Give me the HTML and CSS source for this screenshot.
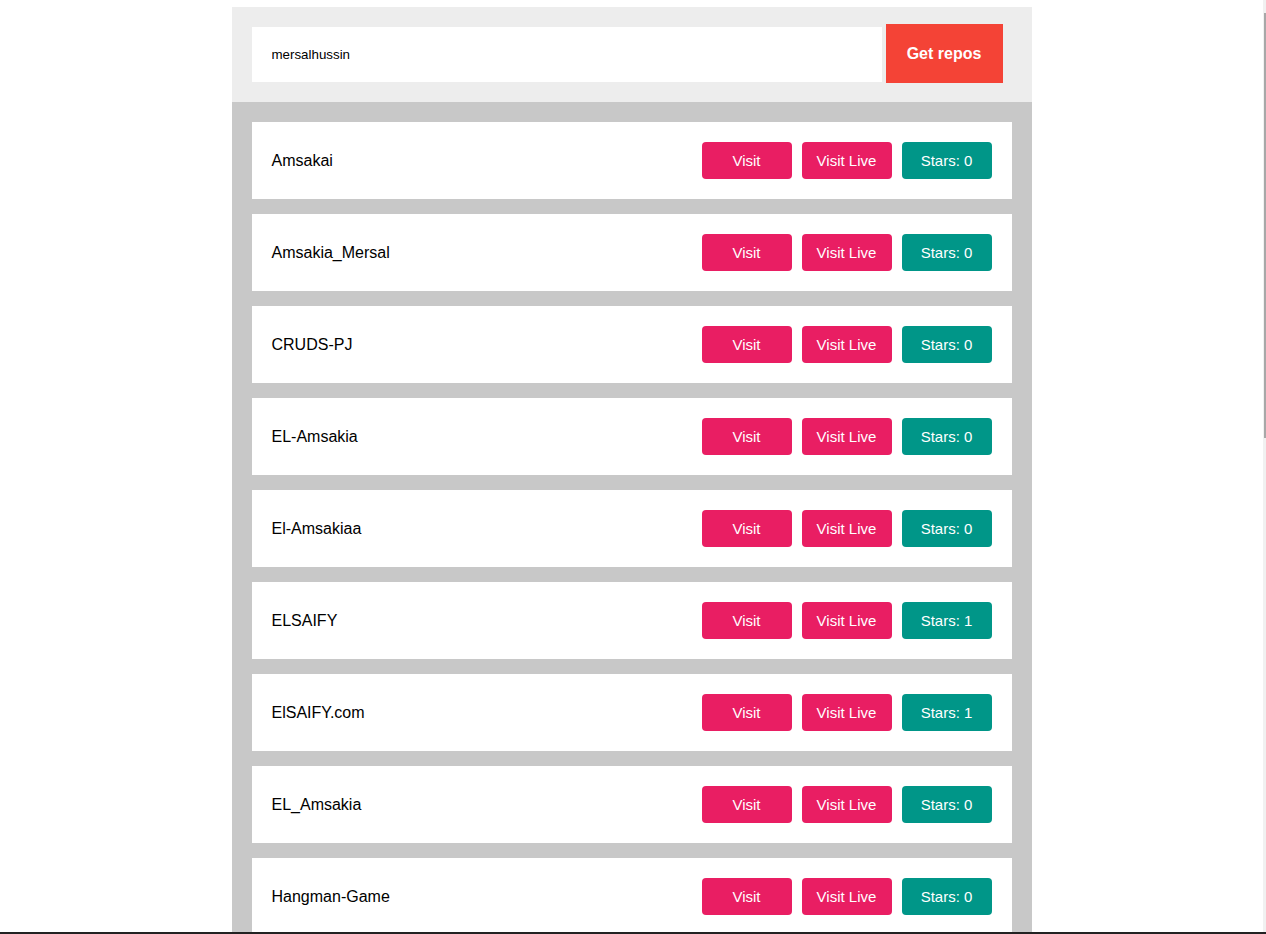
FILE: index.html
```html
<!DOCTYPE html>
<html lang="en">
<head>
<meta charset="utf-8">
<title>Get repos</title>
<link rel="stylesheet" href="styles.css">
</head>
<body>
<div class="container">
  <div class="get-repos">
    <input class="username" type="text" value="mersalhussin">
    <button class="get-button">Get repos</button>
  </div>
  <div class="repos">
    <div class="repo"><span class="name">Amsakai</span><div class="actions"><a class="btn pink">Visit</a><a class="btn pink">Visit Live</a><span class="btn teal">Stars: 0</span></div></div>
    <div class="repo"><span class="name">Amsakia_Mersal</span><div class="actions"><a class="btn pink">Visit</a><a class="btn pink">Visit Live</a><span class="btn teal">Stars: 0</span></div></div>
    <div class="repo"><span class="name">CRUDS-PJ</span><div class="actions"><a class="btn pink">Visit</a><a class="btn pink">Visit Live</a><span class="btn teal">Stars: 0</span></div></div>
    <div class="repo"><span class="name">EL-Amsakia</span><div class="actions"><a class="btn pink">Visit</a><a class="btn pink">Visit Live</a><span class="btn teal">Stars: 0</span></div></div>
    <div class="repo"><span class="name">El-Amsakiaa</span><div class="actions"><a class="btn pink">Visit</a><a class="btn pink">Visit Live</a><span class="btn teal">Stars: 0</span></div></div>
    <div class="repo"><span class="name">ELSAIFY</span><div class="actions"><a class="btn pink">Visit</a><a class="btn pink">Visit Live</a><span class="btn teal">Stars: 1</span></div></div>
    <div class="repo"><span class="name">ElSAIFY.com</span><div class="actions"><a class="btn pink">Visit</a><a class="btn pink">Visit Live</a><span class="btn teal">Stars: 1</span></div></div>
    <div class="repo"><span class="name">EL_Amsakia</span><div class="actions"><a class="btn pink">Visit</a><a class="btn pink">Visit Live</a><span class="btn teal">Stars: 0</span></div></div>
    <div class="repo"><span class="name">Hangman-Game</span><div class="actions"><a class="btn pink">Visit</a><a class="btn pink">Visit Live</a><span class="btn teal">Stars: 0</span></div></div>
    <div class="repo"><span class="name">Portfolio</span><div class="actions"><a class="btn pink">Visit</a><a class="btn pink">Visit Live</a><span class="btn teal">Stars: 0</span></div></div>
  </div>
</div>
<div class="scroll-track"><div class="scroll-thumb"></div></div>
<div class="bottom-edge"></div>
</body>
</html>
```
FILE: styles.css
```css
html {
  scrollbar-width: none;
}
html::-webkit-scrollbar {
  display: none;
}
body {
  margin: 0;
  padding: 7px 3px 0 0;
  background: #fff;
  font-family: "Liberation Sans", Arial, sans-serif;
  color: #000;
}
.container {
  width: 800px;
  margin: 0 auto;
}
.get-repos {
  background: #ededed;
  padding: 20px;
  height: 55px;
  display: flex;
  align-items: flex-start;
}
.username {
  box-sizing: border-box;
  width: 630px;
  height: 55px;
  border: none;
  outline: none;
  padding: 0 20px;
  margin: 0 4px 0 0;
  font-family: "Liberation Sans", Arial, sans-serif;
  font-size: 13.33px;
  color: #000;
  background: #fff;
}
.get-button {
  box-sizing: border-box;
  width: 117px;
  height: 59px;
  margin-top: -3px;
  border: none;
  background: #f44336;
  color: #fff;
  font-family: "Liberation Sans", Arial, sans-serif;
  font-weight: bold;
  font-size: 16px;
  padding: 0;
}
.repos {
  background: #c8c8c8;
  padding: 20px;
  display: flex;
  flex-direction: column;
  gap: 15px;
}
.repo {
  background: #fff;
  height: 77px;
  box-sizing: border-box;
  padding: 20px;
  display: flex;
  align-items: center;
  justify-content: space-between;
}
.name {
  font-size: 16px;
}
.actions {
  display: flex;
  gap: 10px;
}
.btn {
  width: 90px;
  height: 37px;
  border-radius: 4px;
  color: #fff;
  font-size: 15px;
  display: flex;
  align-items: center;
  justify-content: center;
}
.pink {
  background: #e91e63;
}
.teal {
  background: #009688;
}
.scroll-track {
  position: fixed;
  top: 0;
  right: 0;
  width: 3px;
  height: 932px;
  background: #f1f1f1;
}
.scroll-thumb {
  margin: 13px 0 0 1px;
  width: 2px;
  height: 425px;
  background: #a8a8a8;
}
.bottom-edge {
  position: fixed;
  left: 0;
  bottom: 0;
  width: 100%;
  height: 2px;
  background: #222;
}
```
